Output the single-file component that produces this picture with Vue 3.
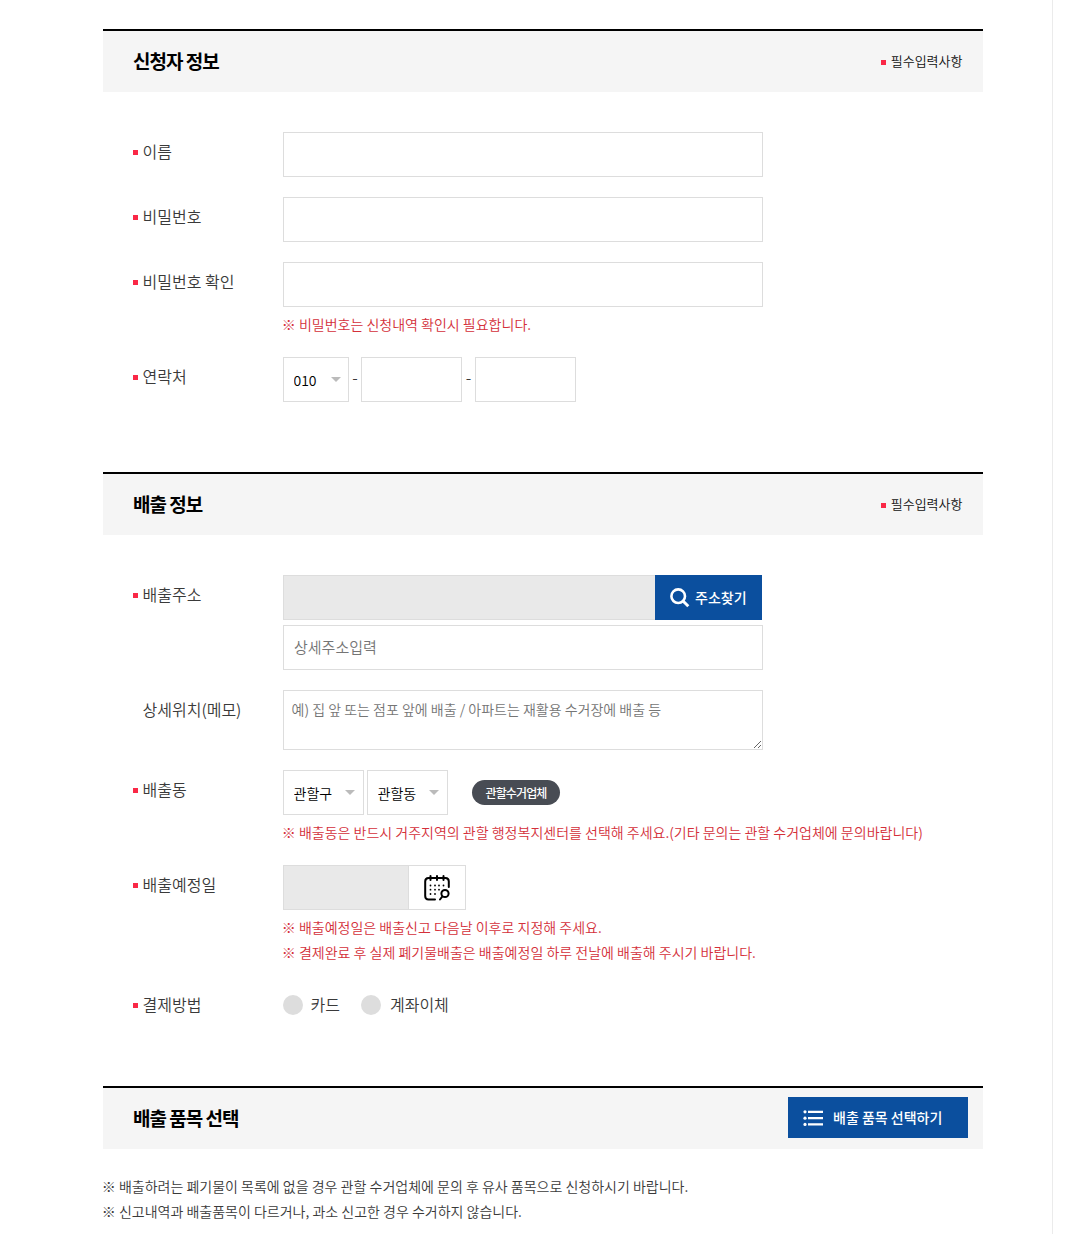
<script setup>
import { ref } from 'vue';

const form = ref({
    name: "",
    password: "",
    passwordCheck: "",
    tel1: "010",
    tel2: "",
    tel3: "",
    address: "",
    addressDetail: "",
    memo: "",
    gu: "관할구",
    dong: "관할동",
    date: "",
    pay: ""
});

const payments = [
    { value: "card", label: "카드" },
    { value: "bank", label: "계좌이체" }
];
</script>

<template>
    <div class="page">
        <section class="applicant">
            <header>
                <h2>신청자 정보</h2>
                <span class="required">필수입력사항</span>
            </header>
            <div class="rows">
                <div class="row">
                    <label class="must" for="name">이름</label>
                    <div class="field"><input type="text" id="name" v-model="form.name"></div>
                </div>
                <div class="row">
                    <label class="must" for="password">비밀번호</label>
                    <div class="field"><input type="password" id="password" v-model="form.password"></div>
                </div>
                <div class="row">
                    <label class="must" for="passwordCheck">비밀번호 확인</label>
                    <div class="field">
                        <input type="password" id="passwordCheck" v-model="form.passwordCheck">
                        <p class="hint">※ 비밀번호는 신청내역 확인시 필요합니다.</p>
                    </div>
                </div>
                <div class="row">
                    <label class="must" for="tel1">연락처</label>
                    <div class="field line">
                        <div class="select tel">
                            <select id="tel1" v-model="form.tel1">
                                <option>010</option>
                            </select>
                        </div>
                        <span class="dash">-</span>
                        <input type="text" class="num" v-model="form.tel2">
                        <span class="dash wide">-</span>
                        <input type="text" class="num" v-model="form.tel3">
                    </div>
                </div>
            </div>
        </section>

        <section class="discharge">
            <header>
                <h2>배출 정보</h2>
                <span class="required">필수입력사항</span>
            </header>
            <div class="rows">
                <div class="row">
                    <label class="must" for="address">배출주소</label>
                    <div class="field">
                        <div class="line">
                            <input type="text" id="address" class="address" v-model="form.address" disabled>
                            <button type="button" class="find">
                                <svg width="20" height="20" viewBox="0 0 20 20" fill="none" stroke="#fff">
                                    <circle cx="8.2" cy="8.2" r="6.8" stroke-width="2.6" />
                                    <path d="M13 13L18.3 18.2" stroke-width="3" />
                                </svg>
                                <span>주소찾기</span>
                            </button>
                        </div>
                        <input type="text" class="detail" placeholder="상세주소입력" v-model="form.addressDetail">
                    </div>
                </div>
                <div class="row">
                    <label for="memo">상세위치(메모)</label>
                    <div class="field">
                        <textarea id="memo" v-model="form.memo" placeholder="예) 집 앞 또는 점포 앞에 배출 / 아파트는 재활용 수거장에 배출 등"></textarea>
                    </div>
                </div>
                <div class="row">
                    <label class="must" for="gu">배출동</label>
                    <div class="field">
                        <div class="line area">
                            <div class="select">
                                <select id="gu" v-model="form.gu">
                                    <option>관할구</option>
                                </select>
                            </div>
                            <div class="select">
                                <select v-model="form.dong">
                                    <option>관할동</option>
                                </select>
                            </div>
                            <button type="button" class="company">관할수거업체</button>
                        </div>
                        <p class="hint">※ 배출동은 반드시 거주지역의 관할 행정복지센터를 선택해 주세요.(기타 문의는 관할 수거업체에 문의바랍니다)</p>
                    </div>
                </div>
                <div class="row">
                    <label class="must" for="date">배출예정일</label>
                    <div class="field">
                        <div class="line">
                            <input type="text" id="date" class="date" v-model="form.date" disabled>
                            <button type="button" class="calendar" aria-label="날짜 선택">
                                <svg width="26" height="26" viewBox="0 0 26 26" fill="none" stroke="#000" stroke-width="2" stroke-linecap="round">
                                    <path d="M11 24.5H4.5Q1.2 24.5 1.2 21V6.5Q1.2 3 4.5 3H21.500Q24.800 3 24.800 6.500V12" />
                                    <path d="M6.5 1V5M13 1V5M19.5 1V5" />
                                    <circle cx="21" cy="18.5" r="3.6" />
                                    <path d="M18.3 21.5L16 24.5" />
                                    <path d="M6.5 10.5h.01M11 10.5h.01M15 10.5h.01M19.5 10.5h.01M6.5 14.7h.01M11 14.7h.01M15 14.7h.01M6.5 19h.01M11 19h.01" stroke-width="1.8" />
                                </svg>
                            </button>
                        </div>
                        <p class="hint">※ 배출예정일은 배출신고 다음날 이후로 지정해 주세요.</p>
                        <p class="hint next">※ 결제완료 후 실제 폐기물배출은 배출예정일 하루 전날에 배출해 주시기 바랍니다.</p>
                    </div>
                </div>
                <div class="row">
                    <label class="must">결제방법</label>
                    <div class="field line pay">
                        <label v-for="item in payments" :key="item.value">
                            <input type="radio" name="pay" :value="item.value" v-model="form.pay">
                            <span>{{ item.label }}</span>
                        </label>
                    </div>
                </div>
            </div>
        </section>

        <section>
            <header>
                <h2>배출 품목 선택</h2>
                <button type="button" class="choose">
                    <svg width="20" height="16" viewBox="0 0 20 16" fill="#fff">
                        <circle cx="2" cy="1.8" r="1.6" />
                        <circle cx="2" cy="8.2" r="1.6" />
                        <circle cx="2" cy="14.4" r="1.6" />
                        <path d="M5 .7h15v2.2H5zM5 7.1h15v2.2H5zM5 13.3h15v2.2H5z" />
                    </svg>
                    <span>배출 품목 선택하기</span>
                </button>
            </header>
            <div class="notes">
                <p>※ 배출하려는 폐기물이 목록에 없을 경우 관할 수거업체에 문의 후 유사 품목으로 신청하시기 바랍니다.</p>
                <p>※ 신고내역과 배출품목이 다르거나, 과소 신고한 경우 수거하지 않습니다.</p>
            </div>
        </section>
    </div>
</template>

<style>
body {
    background-color: #fff;
}
</style>

<style scoped>
.page, .page * {
    box-sizing: border-box;
    font-family: "Noto Sans CJK KR", sans-serif;
}
.page {
    width: 1053px;
    height: 1234px;
    padding: 29px 69px 0 103px;
    border-right: 1px solid #ebebeb;
    color: #3a3a3a;
    font-weight: 350;
}
header {
    display: flex;
    align-items: center;
    justify-content: space-between;
    height: 63px;
    padding: 0 20.5px 0 30px;
    background-color: #f5f5f5;
    border-top: 2px solid #000;
}
h2 {
    margin: 0 0 2px;
    color: #000;
    font-size: 19px;
    font-weight: 700;
    letter-spacing: -1px;
    line-height: 28px;
}
.required {
    display: flex;
    align-items: center;
    margin-bottom: 2px;
    color: #111;
    font-size: 13px;
    line-height: 20px;
}
.required::before {
    content: "";
    width: 5px;
    height: 5px;
    margin: 3px 5px 0 0;
    background-color: #fa2846;
}
.rows {
    display: flex;
    flex-direction: column;
    gap: 20px;
    padding: 40px 0 0 30px;
}
.applicant {
    padding-bottom: 70px;
}
.discharge {
    padding-bottom: 61px;
}
.row {
    display: flex;
}
.row > label {
    display: flex;
    align-items: center;
    width: 150px;
    height: 38px;
    padding-left: 9.5px;
    font-size: 16px;
}
.row > .must {
    padding-left: 0;
}
.must::before {
    content: "";
    width: 5px;
    height: 5px;
    margin: 3px 4.5px 0 0;
    background-color: #fa2846;
}
.line {
    display: flex;
}
input, textarea {
    display: block;
    width: 480px;
    height: 45px;
    margin: 0;
    padding: 0 10px 2px;
    background-color: #fff;
    border: 1px solid #ddd;
    border-radius: 0;
    font-size: 15px;
    font-weight: 350;
}
input:focus, textarea:focus {
    outline: none;
    border-color: #0b4f9e;
}
input:disabled {
    background-color: #e9e9e9;
}
::placeholder {
    color: #757575;
}
textarea {
    height: 60px;
    padding: 8px 7.5px;
    font-size: 14px;
    line-height: 21px;
    resize: both;
}
.hint {
    margin: 5px 0 0 -1.2px;
    color: #d4303a;
    font-size: 14px;
    line-height: 25px;
    white-space: nowrap;
}
.hint.next {
    margin-top: 0;
}
.select {
    position: relative;
    width: 81px;
    height: 45px;
}
.select::after {
    content: "";
    position: absolute;
    top: 20px;
    right: 9px;
    border: 5px solid transparent;
    border-top-color: #bbb;
    border-bottom: 0;
    pointer-events: none;
}
select {
    width: 100%;
    height: 45px;
    padding: 1px 0 0 9.5px;
    appearance: none;
    background-color: #fff;
    color: #000;
    border: 1px solid #ddd;
    border-radius: 0;
    font-size: 14px;
    font-weight: 350;
}
.select.tel {
    width: 66px;
}
.select.tel::after {
    right: 8px;
}
.num {
    width: 101px;
}
.dash {
    width: 12px;
    font-size: 16px;
    line-height: 41px;
    text-align: center;
}
.dash.wide {
    width: 13px;
}
button {
    margin: 0;
    padding: 0;
    border: none;
    cursor: pointer;
}
.address {
    width: 372px;
    border-right: 0;
}
.find, .choose {
    display: flex;
    align-items: center;
    background-color: #0b4f9e;
    color: #fff;
    font-size: 14px;
    font-weight: 500;
}
.find span, .choose span {
    margin-bottom: 2px;
}
.find {
    gap: 5px;
    width: 107px;
    height: 45px;
    padding-left: 15px;
}
.detail {
    margin-top: 5px;
}
.area {
    gap: 3px;
}
.company {
    width: 88px;
    height: 25px;
    margin: 10px 0 0 21px;
    padding-bottom: 1px;
    background-color: #484c54;
    color: #fff;
    border-radius: 13px;
    font-size: 12px;
    font-weight: 500;
    letter-spacing: -0.9px;
}
.date {
    width: 126px;
}
.calendar {
    display: flex;
    align-items: center;
    justify-content: center;
    width: 57px;
    height: 45px;
    background-color: #fff;
    border: 1px solid #ddd;
    border-left: 0;
}
.pay label {
    display: flex;
    align-items: center;
    gap: 8px;
    height: 40px;
    margin-right: 21px;
    font-size: 16px;
}
.pay span {
    margin: 0 0 2px -0.5px;
}
.pay label + label {
    margin-left: 0.5px;
}
.pay label + label span {
    margin-left: 0.5px;
}
.pay input {
    width: 20px;
    height: 20px;
    padding: 0;
    appearance: none;
    background-color: #ddd;
    border: none;
    border-radius: 50%;
}
.pay input:checked {
    border: 6px solid #0b4f9e;
    background-color: #fff;
}
.choose {
    gap: 10px;
    width: 180px;
    height: 41px;
    margin: 0 -5.5px 2px 0;
    padding-left: 15px;
}
.notes {
    padding-top: 25px;
    margin-left: -1.2px;
}
.notes p {
    margin: 0;
    font-size: 14px;
    line-height: 25px;
}
</style>
